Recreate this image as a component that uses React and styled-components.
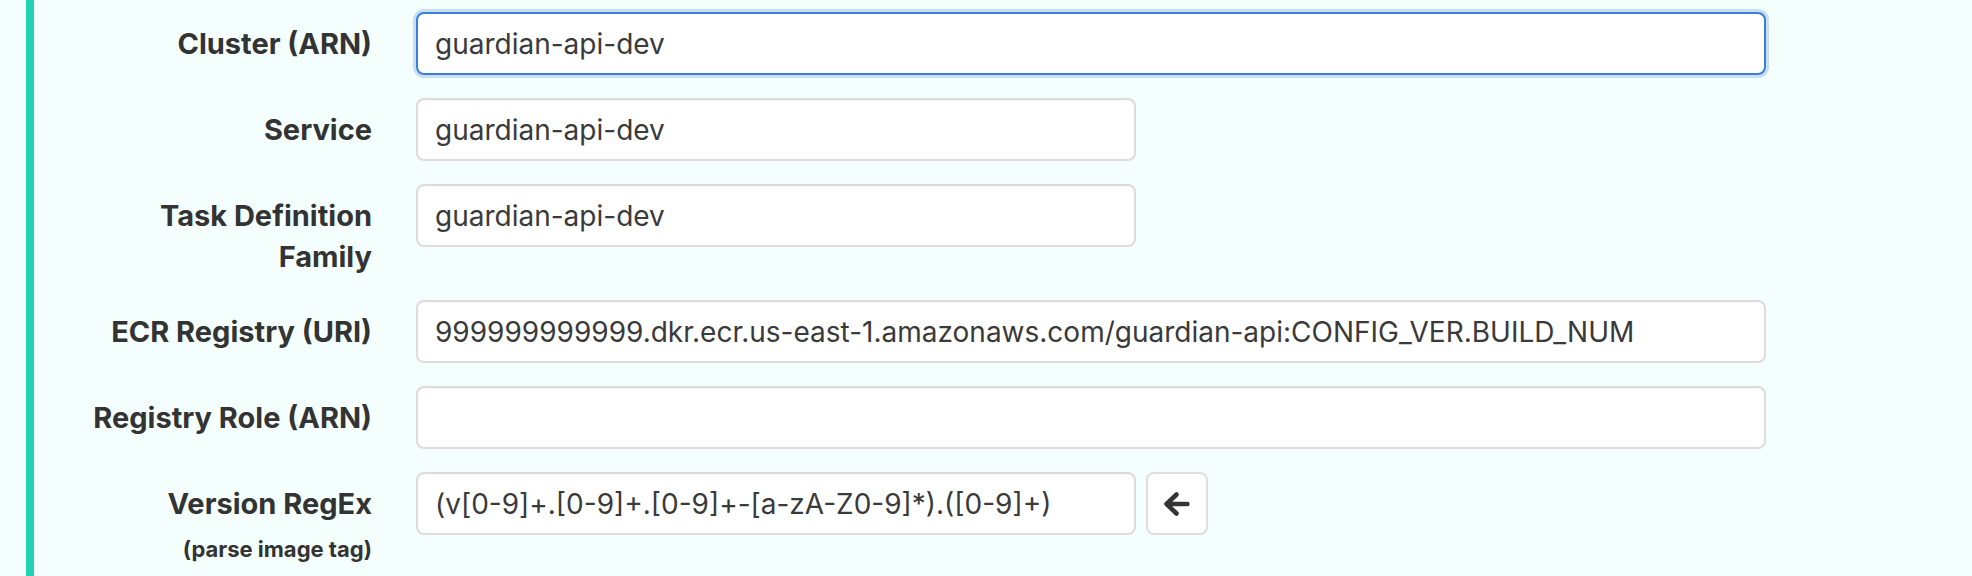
import React from "react";
import styled, { createGlobalStyle } from "styled-components";

const Global = createGlobalStyle`
  html, body { margin: 0; padding: 0; background: #f4fffd; }
  body { font-family: Inter, "Noto Sans", "Liberation Sans", sans-serif; }
  * { box-sizing: border-box; }
`;

const Page = styled.div`
  width: 1972px;
  height: 576px;
  overflow: hidden;
  padding-left: 26px;
  background: #f4fffd;
`;

const Panel = styled.div`
  border-left: 8px solid #23d1b4;
  height: 100%;
  padding-top: 12px;
  padding-left: 46px;
`;

const Row = styled.div`
  display: grid;
  grid-template-columns: 292px 1350px;
  column-gap: 44px;
  margin-bottom: 23px;
  align-items: start;
`;

const Label = styled.label`
  display: block;
  text-align: right;
  color: #333;
  font-weight: 700;
  font-size: 29px;
  line-height: 41px;
  padding-top: 11px;
`;

const Hint = styled.span`
  display: block;
  font-size: 22px;
  line-height: 28px;
  margin-top: 11px;
`;

const Field = styled.div`
  display: flex;
  gap: 10px;
`;

const Input = styled.input`
  width: ${(p) => (p.$half ? "720px" : "100%")};
  height: 63px;
  padding: 0 17px;
  font-family: inherit;
  font-size: 28px;
  color: #3a3a3a;
  background: #fff;
  border: 2px solid ${(p) => (p.$focused ? "#3b7edc" : "#dcdcdc")};
  border-radius: 8px;
  outline: none;
  box-shadow: ${(p) =>
    p.$focused
      ? "0 0 0 3px rgba(59, 126, 220, 0.25)"
      : "inset 0 1px 1px rgba(0, 0, 0, 0.04)"};
`;

const IconButton = styled.button`
  width: 62px;
  height: 63px;
  flex: none;
  display: flex;
  align-items: center;
  justify-content: center;
  padding: 0;
  background: #fff;
  border: 2px solid #dedede;
  border-radius: 8px;
  color: #333;
  cursor: pointer;
`;

const ArrowLeft = () => (
  <svg width="26" height="24" viewBox="0 0 26 24" aria-hidden="true">
    <path
      d="M12.5 2.5 L2.5 12 L12.5 21.5 M2.5 12 H23.5"
      fill="none"
      stroke="currentColor"
      strokeWidth="4.5"
      strokeLinecap="round"
      strokeLinejoin="round"
    />
  </svg>
);

const fields = [
  { label: "Cluster (ARN)", value: "guardian-api-dev", focused: true },
  { label: "Service", value: "guardian-api-dev", half: true },
  { label: "Task Definition Family", value: "guardian-api-dev", half: true },
  {
    label: "ECR Registry (URI)",
    value:
      "999999999999.dkr.ecr.us-east-1.amazonaws.com/guardian-api:CONFIG_VER.BUILD_NUM",
  },
  { label: "Registry Role (ARN)", value: "" },
];

export default function App() {
  return (
    <>
      <Global />
      <Page>
        <Panel>
          {fields.map((f) => (
            <Row key={f.label}>
              <Label>{f.label}</Label>
              <Field>
                <Input
                  readOnly
                  value={f.value}
                  $half={f.half}
                  $focused={f.focused}
                />
              </Field>
            </Row>
          ))}
          <Row>
            <Label>
              Version RegEx
              <Hint>(parse image tag)</Hint>
            </Label>
            <Field>
              <Input
                readOnly
                $half
                value="(v[0-9]+.[0-9]+.[0-9]+-[a-zA-Z0-9]*).([0-9]+)"
              />
              <IconButton type="button" aria-label="Apply">
                <ArrowLeft />
              </IconButton>
            </Field>
          </Row>
        </Panel>
      </Page>
    </>
  );
}
